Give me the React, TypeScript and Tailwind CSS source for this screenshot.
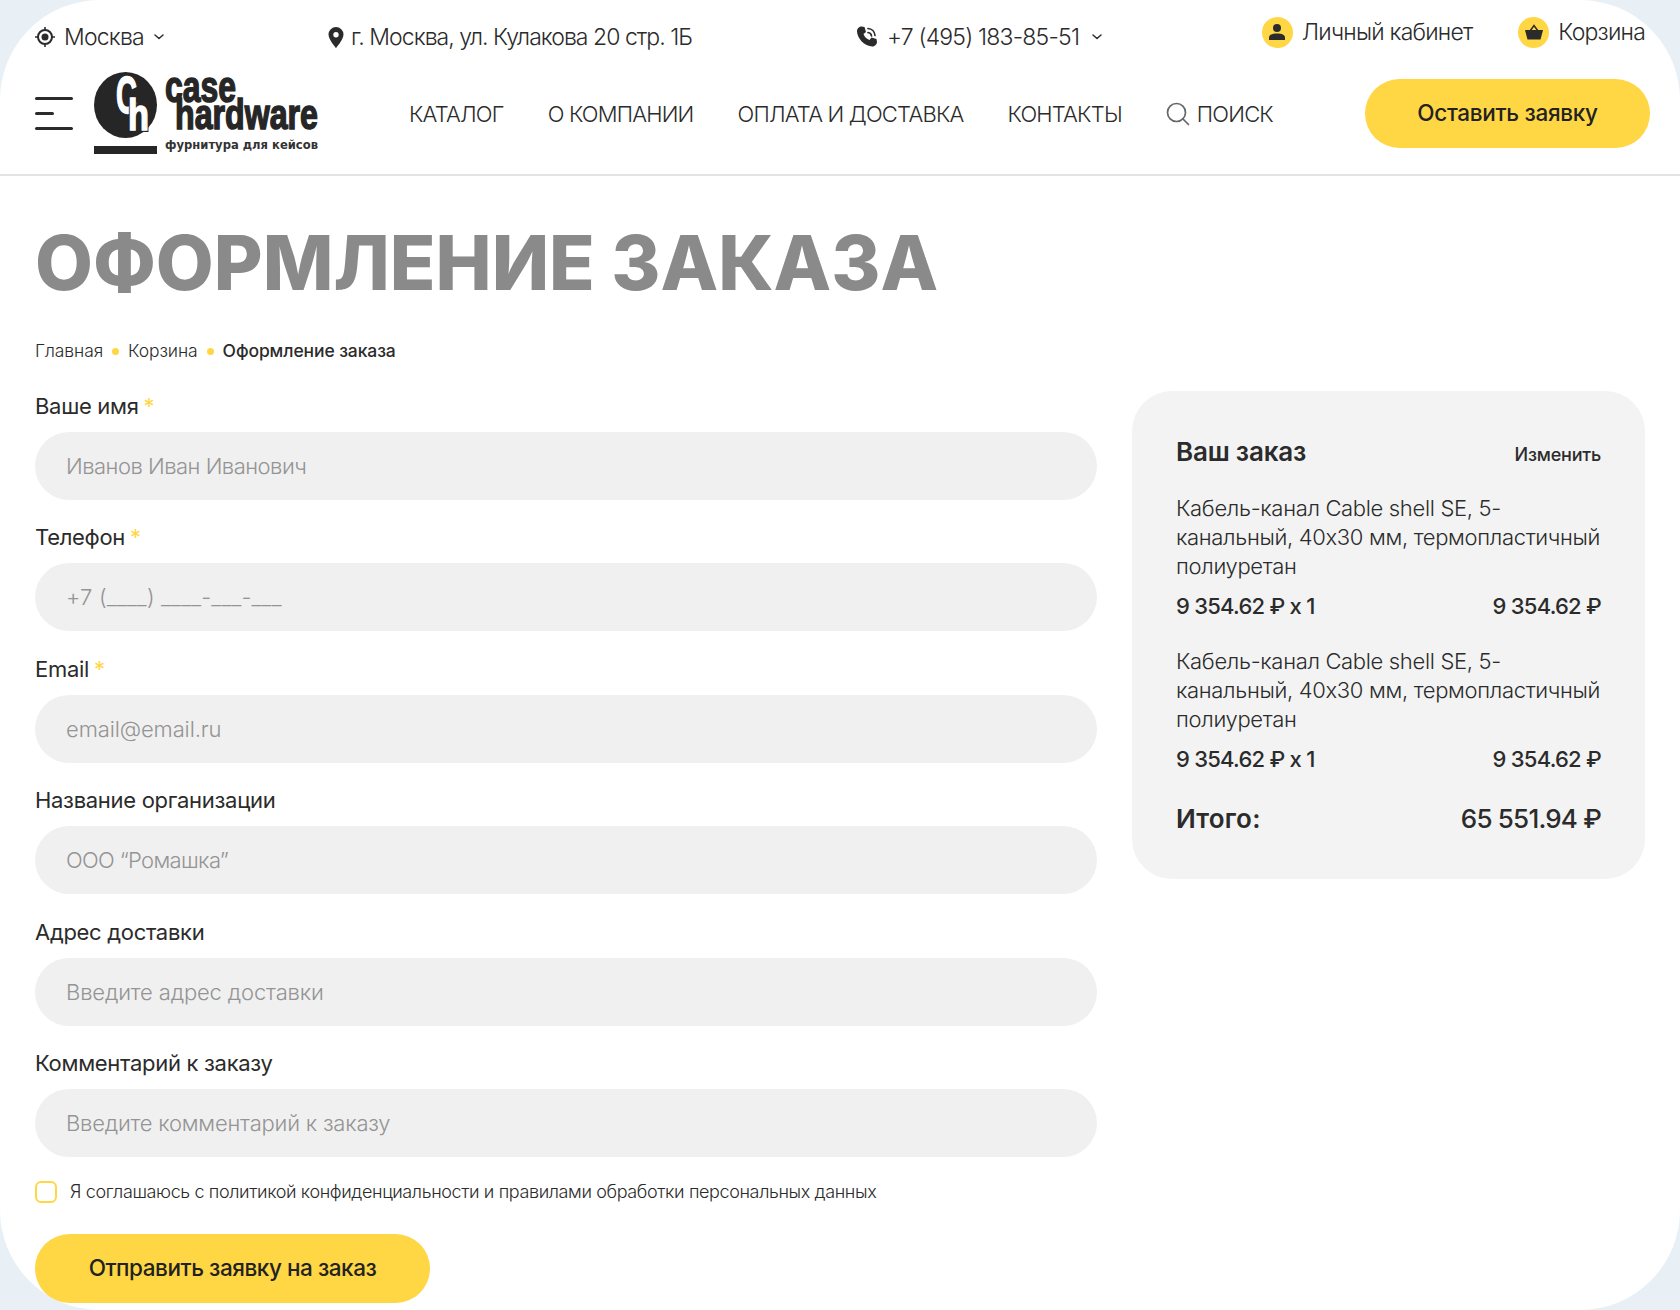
const FONT = "font-['Inter','Noto_Sans',sans-serif]";

const FIELDS = [
  { label: "Ваше имя", placeholder: "Иванов Иван Иванович", required: true, spacing: "tracking-[-0.5px]" },
  { label: "Телефон", placeholder: "+7 (____) ____-___-___", required: true, spacing: "tracking-[0.18px]" },
  { label: "Email", placeholder: "email@email.ru", required: true, spacing: "tracking-[-0.12px]" },
  { label: "Название организации", placeholder: "ООО “Ромашка”", required: false, spacing: "tracking-[-0.65px]" },
  { label: "Адрес доставки", placeholder: "Введите адрес доставки", required: false, spacing: "tracking-[-0.16px]" },
  { label: "Комментарий к заказу", placeholder: "Введите комментарий к заказу", required: false, spacing: "tracking-[-0.22px]" },
];

const NAV = ["КАТАЛОГ", "О КОМПАНИИ", "ОПЛАТА И ДОСТАВКА", "КОНТАКТЫ"];

function Chevron() {
  return (
    <svg width="12" height="8" viewBox="0 0 12 8" fill="none" stroke="#2b2b2b" strokeWidth="1.5" strokeLinecap="round" strokeLinejoin="round">
      <path d="M2 2l4 3.5L10 2" />
    </svg>
  );
}

function Logo() {
  return (
    <svg width="226" height="90" viewBox="0 0 226 90" className="shrink-0">
      <ellipse cx="31.5" cy="35" rx="31.5" ry="33" fill="#262626" />
      <text x="22" y="43" fontFamily="Liberation Sans" fontWeight="700" fontSize="52" fill="#fff" stroke="#fff" strokeWidth="1.5" textLength="21" lengthAdjust="spacingAndGlyphs">C</text>
      <text x="34" y="60" fontFamily="Liberation Sans" fontWeight="700" fontSize="45" fill="none" stroke="#262626" strokeWidth="4" textLength="21" lengthAdjust="spacingAndGlyphs">h</text>
      <text x="34" y="60" fontFamily="Liberation Sans" fontWeight="700" fontSize="45" fill="#fff" stroke="#fff" strokeWidth="1.5" textLength="21" lengthAdjust="spacingAndGlyphs">h</text>
      <rect x="0" y="76" width="63" height="8" fill="#262626" />
      <text x="71" y="32" fontFamily="Liberation Sans" fontWeight="700" fontSize="44" fill="#262626" stroke="#262626" strokeWidth="1.5" textLength="71" lengthAdjust="spacingAndGlyphs">case</text>
      <text x="81" y="59" fontFamily="Liberation Sans" fontWeight="700" fontSize="42" fill="#262626" stroke="#262626" strokeWidth="1.5" textLength="143" lengthAdjust="spacingAndGlyphs">hardware</text>
      <text x="71" y="79" fontFamily="DejaVu Sans" fontWeight="700" fontSize="12.5" fill="#333" textLength="153" lengthAdjust="spacingAndGlyphs">фурнитура для кейсов</text>
    </svg>
  );
}

function OrderItem() {
  return (
    <div>
      <p className="text-[22px] leading-[29px] font-light tracking-[-0.33px] text-[#2b2b2b] whitespace-nowrap">
        Кабель-канал Cable shell SE, 5-<br />канальный, 40х30 мм, термопластичный<br />полиуретан
      </p>
      <div className="flex justify-between mt-[10px] text-[22px] leading-[30px] font-medium tracking-[-0.75px] text-[#2b2b2b]">
        <span>9 354.62 ₽ х 1</span>
        <span>9 354.62 ₽</span>
      </div>
    </div>
  );
}

export default function App() {
  return (
    <div className={`${FONT} h-[1310px] w-full bg-[#e8f0f6] overflow-hidden text-[#2b2b2b]`}>
      <div className="h-full bg-white rounded-[100px] flex flex-col">
        <header className="border-b-2 border-[#e3e3e3] h-[176px] shrink-0 px-[35px]">
          <div className="flex h-[74px] items-center text-[23px] font-light tracking-[-0.8px]">
            <div className="flex items-center gap-[163px]">
              <div className="flex items-center gap-[9px]">
                <svg width="20" height="20" viewBox="0 0 20 20" fill="none" stroke="#2b2b2b">
                  <circle cx="10" cy="10" r="7" strokeWidth="2" />
                  <circle cx="10" cy="10" r="3.5" fill="#2b2b2b" stroke="none" />
                  <path d="M10 0v3M10 17v3M0 10h3M17 10h3" strokeWidth="1.6" />
                </svg>
                <span>Москва</span>
                <Chevron />
              </div>
              <div className="flex items-center gap-[7px]">
                <svg width="16" height="21" viewBox="0 0 16 21">
                  <path fillRule="evenodd" fill="#2b2b2b" d="M8 0a7.5 7.5 0 0 1 7.5 7.5C15.500 12.500 8 21 8 21S.5 12.500.5 7.500A7.500 7.500 0 0 1 8 0zm0 5a2.700 2.700 0 1 0 0 5.400A2.700 2.700 0 0 0 8 5z" />
                </svg>
                <span className="tracking-[-0.97px]">г. Москва, ул. Кулакова 20 стр. 1Б</span>
              </div>
              <div className="flex items-center gap-[8px]">
                <svg width="24" height="24" viewBox="0 0 24 24" fill="none">
                  <path fill="#2b2b2b" d="M6.500 1.500l3 .5 1.500 5-2.500 2c.8 2.700 3.300 5.200 6 6l2-2.500 5 1.500.5 3c0 2-2 4.500-4.500 4.500C9.500 21.500 2 13 2 6c0-2.500 2.500-4.500 4.500-4.500z" />
                  <path d="M13 3.500c3.800.3 6.700 3.200 7 7M13 7.500c1.700.2 3.300 1.600 3.500 3.500" stroke="#2b2b2b" strokeWidth="1.700" strokeLinecap="round" />
                </svg>
                <span>+7 (495) 183-85-51</span>
                <span className="ml-[4px]"><Chevron /></span>
              </div>
            </div>
            <div className="ml-auto flex items-center gap-[46px] -mt-[10px]">
              <div className="flex items-center gap-[9px]">
                <span className="w-[31px] h-[31px] rounded-full bg-[#ffd644] flex items-center justify-center">
                  <svg width="18" height="18" viewBox="0 0 18 18" fill="#2b2b2b">
                    <circle cx="9" cy="5" r="4" />
                    <path d="M1 17v-2.500C1 12 4 10.500 9 10.500s8 1.500 8 4V17z" />
                  </svg>
                </span>
                <span>Личный кабинет</span>
              </div>
              <div className="flex items-center gap-[9px]">
                <span className="w-[31px] h-[31px] rounded-full bg-[#ffd644] flex items-center justify-center">
                  <svg width="18" height="16" viewBox="0 0 18 16">
                    <path d="M5 7l4-5.500L13 7" fill="none" stroke="#2b2b2b" strokeWidth="1.500" />
                    <path d="M0 6h18l-2.500 9.500h-13z" fill="#2b2b2b" />
                  </svg>
                </span>
                <span>Корзина</span>
              </div>
            </div>
          </div>

          <div className="flex items-center h-[84px] -mt-[2px]">
            <div className="flex flex-col gap-[12px] w-[38px] shrink-0 mb-[2px]">
              <span className="h-[3px] bg-[#2b2b2b] rounded-full w-full" />
              <span className="h-[3px] bg-[#2b2b2b] rounded-full w-[19px]" />
              <span className="h-[3px] bg-[#2b2b2b] rounded-full w-full" />
            </div>
            <div className="ml-[21px] mt-[2px]"><Logo /></div>
            <nav className="flex items-center gap-[44px] ml-[89px] text-[22px] font-light tracking-[-0.8px]">
              {NAV.map((n) => (
                <span key={n}>{n}</span>
              ))}
              <span className="flex items-center gap-[7px]">
                <svg width="24" height="24" viewBox="0 0 24 24" fill="none" stroke="#666" strokeWidth="1.700" strokeLinecap="round">
                  <circle cx="10.500" cy="10.500" r="9" />
                  <path d="M17 17l5.500 5.500" />
                </svg>
                ПОИСК
              </span>
            </nav>
            <button className="ml-auto mr-[-5px] mb-[2px] w-[285px] h-[69px] rounded-full bg-[#ffd644] text-[22.500px] font-medium tracking-[-0.3px] text-[#222]">
              Оставить заявку
            </button>
          </div>
        </header>

        <main className="px-[35px] flex-1">
          <h1 className="mt-[47px] text-[75px] leading-[80px] font-extrabold text-[#8a8a8a]">
            ОФОРМЛЕНИЕ ЗАКАЗА
          </h1>
          <div className="mt-[36px] flex items-center text-[17.500px] leading-[24px] font-light tracking-[-0.1px]">
            <span>Главная</span>
            <span className="mx-[9px] w-[7px] h-[7px] rounded-full bg-[#ffd644]" />
            <span>Корзина</span>
            <span className="mx-[9px] w-[7px] h-[7px] rounded-full bg-[#ffd644]" />
            <span className="font-medium">Оформление заказа</span>
          </div>

          <div className="flex gap-[35px] mt-[26.500px]">
            <form className="w-[1062px] shrink-0">
              <div className="flex flex-col gap-[21.500px]">
                {FIELDS.map((f) => (
                  <label key={f.label} className="block">
                    <span className="block text-[22px] leading-[32px] font-normal tracking-[-0.3px]">
                      {f.label}
                      {f.required && <span className="text-[#ffd644] ml-[5px]">*</span>}
                    </span>
                    <input
                      className={`mt-[10px] block w-full h-[68px] rounded-full bg-[#f0f0f0] px-[31px] text-[22px] font-light outline-none placeholder:text-[#949494] ${f.spacing}`}
                      placeholder={f.placeholder}
                    />
                  </label>
                ))}
              </div>
              <div className="flex items-center gap-[13px] mt-[22.500px]">
                <span className="w-[22px] h-[22px] rounded-[6px] border-2 border-[#ffd644]" />
                <span className="text-[18px] leading-[24px] font-light tracking-[-0.38px]">
                  Я соглашаюсь с политикой конфиденциальности и правилами обработки персональных данных
                </span>
              </div>
              <button type="button" className="mt-[30px] w-[395px] h-[69px] rounded-full bg-[#ffd644] text-[22.500px] font-medium tracking-[-0.45px] text-[#222]">
                Отправить заявку на заказ
              </button>
            </form>

            <aside className="w-[513px] h-[488px] shrink-0 bg-[#f3f3f3] rounded-[40px] px-[44px] pt-[44px] mt-[1.500px]">
              <div className="flex items-center justify-between">
                <span className="text-[26px] leading-[34px] font-semibold tracking-[-0.2px]">Ваш заказ</span>
                <span className="text-[18px] font-medium tracking-[-0.2px] mt-[4px]">Изменить</span>
              </div>
              <div className="mt-[25px] flex flex-col gap-[26px]">
                <OrderItem />
                <OrderItem />
              </div>
              <div className="flex justify-between items-center mt-[27px] text-[26px] leading-[36px] font-medium">
                <span className="font-semibold tracking-[0.2px]">Итого:</span>
                <span className="tracking-[-0.8px]">65 551.94 ₽</span>
              </div>
            </aside>
          </div>
        </main>
      </div>
    </div>
  );
}
